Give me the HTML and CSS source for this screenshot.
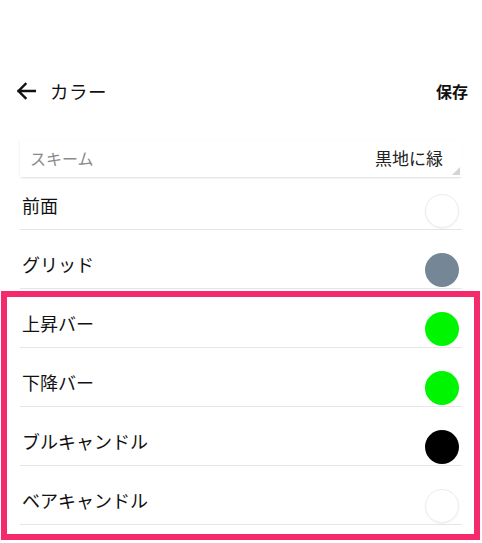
FILE: index.html
```html
<!DOCTYPE html>
<html lang="ja">
<head>
    <meta charset="UTF-8">
    <meta name="viewport" content="width=device-width, initial-scale=1.0">
    <title>カラー</title>
    <link rel="stylesheet" href="styles.css">
</head>
<body>
    <div class="header">
        <div class="back">
            <svg width="20" height="18" viewBox="0 0 20 18">
                <path d="M19 9H2.5M9.5 2L2.5 9L9.5 16" fill="none" stroke="#111" stroke-width="2.4" stroke-linecap="square"/>
            </svg>
            <span class="title">カラー</span>
        </div>
        <div class="save">保存</div>
    </div>

    <div class="content">
        <div class="scheme">
            <span class="scheme-label">スキーム</span>
            <span class="scheme-value">黒地に緑</span>
        </div>

        <div class="row">
            <span class="label">前面</span>
            <span class="swatch white"></span>
        </div>
        <div class="row">
            <span class="label">グリッド</span>
            <span class="swatch grid"></span>
        </div>

        <div class="highlight">
            <div class="row">
                <span class="label">上昇バー</span>
                <span class="swatch green"></span>
            </div>
            <div class="row">
                <span class="label">下降バー</span>
                <span class="swatch green"></span>
            </div>
            <div class="row">
                <span class="label">ブルキャンドル</span>
                <span class="swatch black"></span>
            </div>
            <div class="row">
                <span class="label">ベアキャンドル</span>
                <span class="swatch white"></span>
            </div>
        </div>
    </div>
</body>
</html>
```

FILE: styles.css
```css
body {
    margin: 0;
    background-color: #fff;
    color: #111;
    font-family: "Noto Sans CJK JP", "Noto Sans", sans-serif;
}
.header {
    display: flex;
    justify-content: space-between;
    align-items: center;
    height: 40px;
    margin-top: 71px;
    padding: 0 14px 0 16px;
}
.back {
    display: flex;
    align-items: center;
    gap: 14px;
}
.back svg {
    display: block;
}
.title {
    font-size: 18.5px;
    letter-spacing: 0.5px;
}
.save {
    font-size: 16px;
    font-weight: bold;
}
.content {
    margin: 29px 20px 0 20px;
}
.scheme {
    position: relative;
    display: flex;
    justify-content: space-between;
    align-items: center;
    height: 35px;
    padding: 0 19px 2px 10px;
    box-shadow: 0 2px 2px -1px rgba(0,0,0,0.12), -1px 0 2px rgba(0,0,0,0.04);
    margin-bottom: -6px;
}
.scheme::after {
    content: "";
    position: absolute;
    right: 2px;
    bottom: 2px;
    border-left: 8px solid transparent;
    border-bottom: 8px solid #d4d4d4;
}
.scheme-label {
    font-size: 16px;
    color: #8a8a8a;
}
.scheme-value {
    font-size: 17px;
    color: #222;
}
.row {
    display: flex;
    justify-content: space-between;
    align-items: flex-end;
    height: 58px;
    border-bottom: 1px solid #e6e6e6;
    padding: 0 3px 0 2px;
}
.label {
    font-size: 18px;
    line-height: 24px;
    margin-bottom: 12px;
}
.swatch {
    width: 34px;
    height: 34px;
    border-radius: 50%;
    margin-bottom: 1px;
    box-sizing: border-box;
}
.white {
    background-color: #fff;
    border: 1px solid #ececec;
    box-shadow: 0 1px 2px rgba(0,0,0,0.05);
}
.grid { background-color: #758697; }
.green { background-color: #00f500; }
.black { background-color: #000; }
.highlight {
    position: relative;
    padding-bottom: 15px;
}
.highlight::before {
    content: "";
    position: absolute;
    top: 2px;
    left: -19px;
    right: -18px;
    bottom: 0;
    border: 6px solid #f42a6d;
    pointer-events: none;
}
```
